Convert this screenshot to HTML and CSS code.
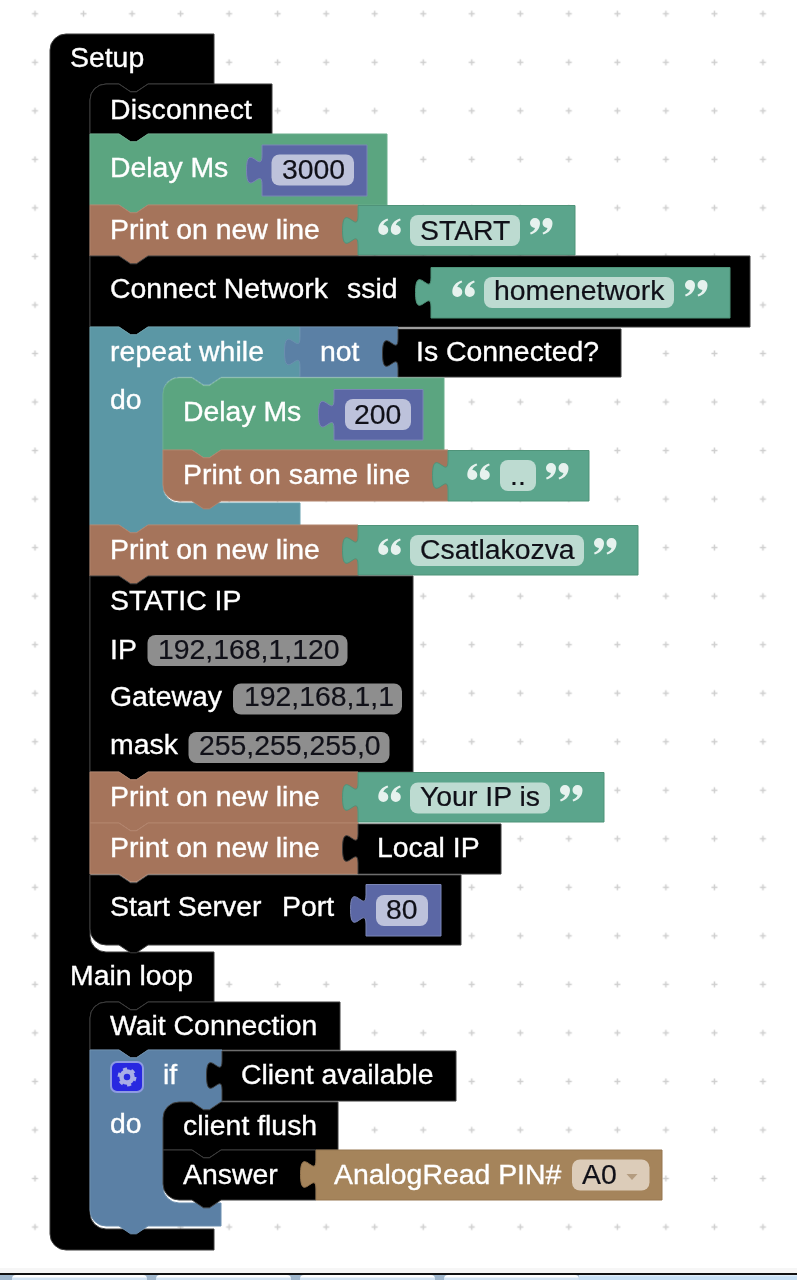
FILE: index.html
```html
<!DOCTYPE html>
<html lang="en">
<head>
<meta charset="utf-8">
<title>Blocks workspace</title>
<link rel="stylesheet" href="styles.css">
</head>
<body>
<main class="workspace">
<svg class="canvas" width="797" height="1268" viewBox="0 0 797 1268" xmlns="http://www.w3.org/2000/svg">
  <defs>
    <pattern id="dots" x="10.74" y="-10.49" width="48.53" height="48.53" patternUnits="userSpaceOnUse">
      <rect class="dot" x="21.26" y="23.51" width="6" height="1.5"/>
      <rect class="dot" x="23.51" y="21.26" width="1.5" height="6"/>
    </pattern>
    <g id="qo">
      <path d="M9.5,0.5C4,2 0.3,6.5 0.3,12A5,5 0 1 0 5.3,7C5.8,5 7.5,3.4 10.3,2.2Z"/>
      <path transform="translate(12.5,0)" d="M9.5,0.5C4,2 0.3,6.5 0.3,12A5,5 0 1 0 5.3,7C5.8,5 7.5,3.4 10.3,2.2Z"/>
    </g>
    <g id="qc"><use href="#qo" transform="rotate(180 11.4 8.5)"/></g>
  </defs>
  <rect class="grid" width="797" height="1268"/>

  <!-- outer stack: Setup / Main loop -->
  <path class="k" d="M50,50a16,16 0 0 1 16,-16H214V84H148l-11.6,7.8 -5.8,0 -11.6,-7.8H106a16,16 0 0 0 -16,16V936a16,16 0 0 0 16,16H214V1002H148l-11.6,7.8 -5.8,0 -11.6,-7.8H106a16,16 0 0 0 -16,16V1213a16,16 0 0 0 16,16H214V1250H66a16,16 0 0 1 -16,-16Z"/>
  <text class="t" x="70" y="67">Setup</text>

  <!-- Disconnect -->
  <path class="k" d="M90,100a16,16 0 0 1 16,-16H119l11.6,7.8 5.8,0 11.6,-7.8H272V134H148l-11.6,7.8 -5.8,0 -11.6,-7.8H90Z"/>
  <text class="t" x="110" y="118.500" textLength="142">Disconnect</text>

  <!-- Delay 3000 -->
  <path class="gd" d="M90,134H119l11.6,7.8 5.8,0 11.6,-7.8H387V205H148l-11.6,7.8 -5.8,0 -11.6,-7.8H90Z"/>
  <text class="t" x="110" y="177">Delay Ms</text>
  <path class="nm" d="M262,145H367V196H262V184.7c0,-19.4 -15.5,15.5 -15.5,-14.55s15.5,4.85 15.5,-14.55Z"/>
  <rect class="fd" x="271.5" y="154.5" width="82.500" height="31" rx="8"/>
  <text class="v" x="282" y="179">3000</text>

  <!-- Print START -->
  <path class="br" d="M90,205H119l11.6,7.8 5.8,0 11.6,-7.8H358V256H148l-11.6,7.8 -5.8,0 -11.6,-7.8H90Z"/>
  <text class="t" x="110" y="239">Print on new line</text>
  <path class="st" d="M358,205.500H575V255H358V245c0,-19.4 -15.5,15.5 -15.5,-14.55s15.5,4.85 15.5,-14.55Z"/>
  <use class="q" href="#qo" x="378" y="218"/>
  <rect class="fd" x="410" y="215" width="110" height="31" rx="8"/>
  <text class="v" x="420" y="240">START</text>
  <use class="q" href="#qc" x="530" y="218"/>

  <!-- Connect Network -->
  <path class="k" d="M90,256H119l11.6,7.8 5.8,0 11.6,-7.8H750V327H148l-11.6,7.8 -5.8,0 -11.6,-7.8H90Z"/>
  <text class="t" x="110" y="298" textLength="218">Connect Network</text>
  <text class="t" x="347" y="298">ssid</text>
  <path class="st" d="M431,267.500H730V318H431V307c0,-19.4 -15.5,15.5 -15.5,-14.55s15.5,4.85 15.5,-14.55Z"/>
  <use class="q" href="#qo" x="452" y="280"/>
  <rect class="fd" x="484" y="277" width="190" height="31" rx="8"/>
  <text class="v" x="494" y="300">homenetwork</text>
  <use class="q" href="#qc" x="685" y="280"/>

  <!-- repeat while -->
  <path class="rp" d="M90,327H119l11.6,7.8 5.8,0 11.6,-7.8H300V377H221l-11.6,7.8 -5.8,0 -11.6,-7.8H179a16,16 0 0 0 -16,16V487a16,16 0 0 0 16,16H300V525H148l-11.6,7.8 -5.8,0 -11.6,-7.8H90Z"/>
  <text class="t" x="110" y="361" textLength="154">repeat while</text>
  <text class="t" x="110" y="409">do</text>
  <path class="lg" d="M300,327H398V377H300V366.500c0,-19.4 -15.5,15.5 -15.5,-14.55s15.5,4.85 15.5,-14.55Z"/>
  <text class="t" x="320" y="361">not</text>
  <path class="k" d="M398,329H621V377H398V368c0,-19.4 -15.5,15.5 -15.5,-14.55s15.5,4.85 15.5,-14.55Z"/>
  <text class="t" x="416" y="361">Is Connected?</text>

  <!-- Delay 200 -->
  <path class="gd" d="M163,394a16,16 0 0 1 16,-16H192l11.6,7.8 5.8,0 11.6,-7.8H444V450H221l-11.6,7.8 -5.8,0 -11.6,-7.8H163Z"/>
  <text class="t" x="183" y="421">Delay Ms</text>
  <path class="nm" d="M334,389.500H423V440H334V428.700c0,-19.4 -15.5,15.5 -15.5,-14.55s15.500,4.85 15.500,-14.55Z"/>
  <rect class="fd" x="345" y="399" width="66" height="31" rx="8"/>
  <text class="v" x="354" y="424">200</text>

  <!-- Print on same line -->
  <path class="br" d="M163,450H192l11.6,7.8 5.8,0 11.6,-7.8H448V501H221l-11.6,7.8 -5.8,0 -11.6,-7.8H179a16,16 0 0 1 -16,-16Z"/>
  <text class="t" x="183" y="484">Print on same line</text>
  <path class="st" d="M448,450.500H589V501H448V490c0,-19.4 -15.5,15.5 -15.5,-14.55s15.5,4.85 15.5,-14.55Z"/>
  <use class="q" href="#qo" x="467" y="463"/>
  <rect class="fd" x="500" y="460" width="36" height="31" rx="8"/>
  <text class="v" x="510" y="485">..</text>
  <use class="q" href="#qc" x="546" y="463"/>

  <!-- Print Csatlakozva -->
  <path class="br" d="M90,525H119l11.6,7.8 5.8,0 11.6,-7.8H358V576H148l-11.6,7.8 -5.8,0 -11.6,-7.8H90Z"/>
  <text class="t" x="110" y="559">Print on new line</text>
  <path class="st" d="M358,525.500H638V575H358V565c0,-19.4 -15.5,15.5 -15.5,-14.55s15.5,4.85 15.5,-14.55Z"/>
  <use class="q" href="#qo" x="378" y="538"/>
  <rect class="fd" x="410" y="535" width="174" height="31" rx="8"/>
  <text class="v" x="420" y="559">Csatlakozva</text>
  <use class="q" href="#qc" x="594" y="538"/>

  <!-- STATIC IP -->
  <path class="k" d="M90,576H119l11.6,7.8 5.8,0 11.6,-7.8H413V772H148l-11.6,7.8 -5.8,0 -11.6,-7.8H90Z"/>
  <text class="t" x="110" y="610">STATIC IP</text>
  <text class="t" x="110" y="659">IP</text>
  <rect class="fg" x="147.500" y="635" width="200" height="31" rx="8"/>
  <text class="v" x="158" y="659">192,168,1,120</text>
  <text class="t" x="110" y="706">Gateway</text>
  <rect class="fg" x="233" y="683.500" width="169" height="31" rx="8"/>
  <text class="v" x="244" y="706">192,168,1,1</text>
  <text class="t" x="110" y="754">mask</text>
  <rect class="fg" x="188.500" y="732" width="201" height="31" rx="8"/>
  <text class="v" x="199" y="755">255,255,255,0</text>

  <!-- Print Your IP is -->
  <path class="br" d="M90,772H119l11.6,7.8 5.8,0 11.6,-7.8H358V823H148l-11.6,7.8 -5.8,0 -11.6,-7.8H90Z"/>
  <text class="t" x="110" y="806">Print on new line</text>
  <path class="st" d="M358,772.500H604V822H358V812c0,-19.4 -15.5,15.5 -15.5,-14.55s15.5,4.85 15.5,-14.55Z"/>
  <use class="q" href="#qo" x="378" y="785"/>
  <rect class="fd" x="410" y="782.500" width="140" height="31" rx="8"/>
  <text class="v" x="420" y="806">Your IP is</text>
  <use class="q" href="#qc" x="560" y="785"/>

  <!-- Print Local IP -->
  <path class="br" d="M90,823H119l11.6,7.8 5.8,0 11.6,-7.8H358V874H148l-11.6,7.8 -5.8,0 -11.6,-7.8H90Z"/>
  <text class="t" x="110" y="857">Print on new line</text>
  <path class="k" d="M358,824H501V874H358V863c0,-19.4 -15.5,15.5 -15.5,-14.55s15.5,4.85 15.5,-14.55Z"/>
  <text class="t" x="377" y="857">Local IP</text>

  <!-- Start Server -->
  <path class="k" d="M90,875H119l11.6,7.8 5.8,0 11.6,-7.8H461V945H148l-11.6,7.8 -5.8,0 -11.6,-7.8H106a16,16 0 0 1 -16,-16Z"/>
  <text class="t" x="110" y="916">Start Server</text>
  <text class="t" x="282" y="916">Port</text>
  <path class="nm" d="M366,884.500H441V936H366V924c0,-19.4 -15.5,15.5 -15.5,-14.55s15.5,4.85 15.5,-14.55Z"/>
  <rect class="fd" x="376" y="895" width="52" height="31" rx="8"/>
  <text class="v" x="386" y="919">80</text>

  <text class="t" x="70" y="985">Main loop</text>

  <!-- Wait Connection -->
  <path class="k" d="M90,1018a16,16 0 0 1 16,-16H119l11.6,7.8 5.8,0 11.6,-7.8H340V1050H148l-11.6,7.8 -5.8,0 -11.6,-7.8H90Z"/>
  <text class="t" x="110" y="1035">Wait Connection</text>

  <!-- if / do -->
  <path class="lg" d="M90,1050H119l11.6,7.8 5.8,0 11.6,-7.8H222V1102H221l-11.6,7.8 -5.8,0 -11.6,-7.8H179a16,16 0 0 0 -16,16V1187a16,16 0 0 0 16,16H221V1226H148l-11.6,7.8 -5.8,0 -11.6,-7.8H106a16,16 0 0 1 -16,-16Z"/>
  <rect class="icon-box" x="111" y="1062" width="32" height="30" rx="6"/>
  <circle class="gear-ring" cx="127" cy="1077" r="5.500"/>
  <circle class="gear-teeth" cx="127" cy="1077" r="8"/>
  <text class="t" x="163" y="1084">if</text>
  <text class="t" x="110" y="1133">do</text>
  <path class="k" d="M222,1051H456V1101H222V1090c0,-19.4 -15.5,15.5 -15.5,-14.55s15.5,4.85 15.5,-14.55Z"/>
  <text class="t" x="241" y="1084">Client available</text>

  <!-- client flush -->
  <path class="k" d="M163,1118a16,16 0 0 1 16,-16H192l11.6,7.8 5.8,0 11.6,-7.8H338V1150H221l-11.6,7.8 -5.8,0 -11.6,-7.8H163Z"/>
  <text class="t" x="183" y="1135">client flush</text>

  <!-- Answer -->
  <path class="k" d="M163,1150H192l11.6,7.8 5.8,0 11.6,-7.8H316V1200H221l-11.6,7.8 -5.8,0 -11.6,-7.8H179a16,16 0 0 1 -16,-16Z"/>
  <text class="t" x="183" y="1184">Answer</text>
  <path class="an" d="M316,1150H662V1200H316V1189c0,-19.4 -15.5,15.5 -15.5,-14.55s15.5,4.85 15.5,-14.55Z"/>
  <text class="t" x="334" y="1184">AnalogRead PIN#</text>
  <rect class="fa" x="572" y="1159.500" width="77.500" height="31" rx="8"/>
  <text class="v" x="582" y="1184">A0</text>
  <path class="arrow" d="M626.500,1174H637.500L632,1180Z"/>
</svg>
</main>
<div class="edge"></div>
<nav class="tabs">
  <span class="tab"></span>
  <span class="tab"></span>
  <span class="tab"></span>
  <span class="tab"></span>
  <span class="tab-rest"></span>
</nav>
</body>
</html>
```

FILE: styles.css
```css
html, body {
  margin: 0;
  padding: 0;
  background: #fff;
}
body {
  width: 797px;
  height: 1280px;
  overflow: hidden;
  font-family: "Liberation Sans", Arial, sans-serif;
}
.workspace {
  height: 1268px;
}
.canvas {
  display: block;
  filter: blur(0.45px);
}
.grid { fill: url(#dots); }
.dot { fill: #cfcfcf; }

.k  { fill: #000; stroke: #3c3c3c; stroke-width: 1; }
.gd { fill: #5ba580; stroke: #6aae8c; stroke-width: 1; }
.br { fill: #a5745b; stroke: #b2846d; stroke-width: 1; }
.st { fill: #5ba58c; stroke: #4f9379; stroke-width: 1; }
.rp { fill: #5b97a5; stroke: #6ba2af; stroke-width: 1; }
.lg { fill: #5b80a5; stroke: #6c8fb0; stroke-width: 1; }
.nm { fill: #5b67a5; stroke: #7b86b6; stroke-width: 1; }
.an { fill: #a5845b; stroke: #967650; stroke-width: 1; }

.fd { fill: #fff; fill-opacity: 0.6; }
.fg { fill: #8e8e8e; }
.fa { fill: #dcccb9; }

.t, .v {
  font-family: "Liberation Sans", Arial, sans-serif;
  font-size: 28.4px;
}
.t { fill: #fff; stroke: #fff; stroke-width: 0.35px; }
.v { fill: #101018; stroke: #101018; stroke-width: 0.2px; }
.q { fill: #fff; fill-opacity: 0.85; }

.icon-box { fill: #2828e0; stroke: #8e9be2; stroke-width: 2; }
.gear-ring { fill: none; stroke: #a9aee6; stroke-width: 4.5; }
.gear-teeth { fill: none; stroke: #a9aee6; stroke-width: 3; stroke-dasharray: 4 4.38; }
.arrow { fill: #b49c80; }

.edge {
  height: 5px;
  background: #f6f6f6;
}
.tabs {
  display: flex;
  height: 7px;
  padding-left: 12px;
  background: #9fb6cc;
  border-top: 2px solid #111;
  box-sizing: border-box;
}
.tab {
  width: 135px;
  border-radius: 4px 4px 0 0;
  background: linear-gradient(#fff 0, #fff 2px, #d3e4f4 3px);
}
.tab + .tab {
  margin-left: 9px;
}
.tab-rest {
  flex: 1;
  background: linear-gradient(#e6f0fa 0, #c6dff5 2px);
}
```
